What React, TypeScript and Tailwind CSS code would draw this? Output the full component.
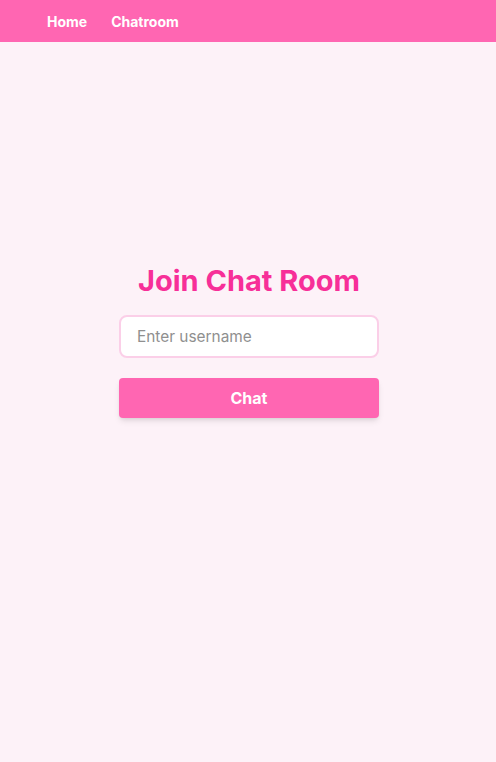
export default function App() {
    return (
        <div className="min-h-screen bg-[#fdf2f8]" style={{ fontFamily: 'Inter, "Liberation Sans", sans-serif' }}>
            <nav className="h-[42px] bg-[#ff66b2] flex items-center gap-6 pl-[47px] pt-px">
                <a className="text-white text-sm font-bold">Home</a>
                <a className="text-white text-sm font-bold">Chatroom</a>
            </nav>

            <main className="flex flex-col items-center pt-[221px] pl-[2px]">
                <h1 className="text-[29px] leading-[35px] font-bold text-[#f72f98] mb-[17px]">Join Chat Room</h1>
                <input
                    type="text"
                    placeholder="Enter username"
                    className="w-[260px] h-[43px] px-4 bg-white border-2 border-[#fbcfe8] rounded-lg text-[15.4px] placeholder:text-[#8f8f8f] outline-none"
                />
                <button className="mt-5 w-[260px] h-[40px] bg-[#ff66b2] text-white font-bold rounded shadow-md">
                    Chat
                </button>
            </main>
        </div>
    );
}
